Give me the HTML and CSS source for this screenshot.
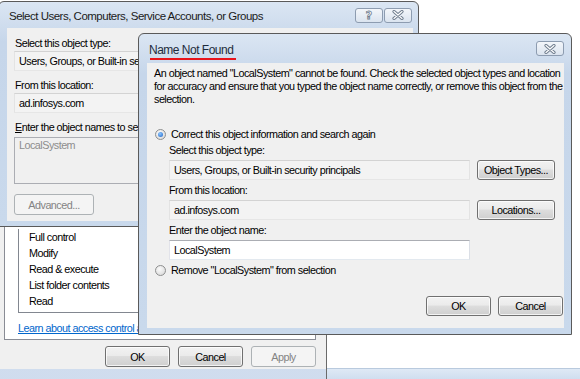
FILE: index.html
```html
<!DOCTYPE html>
<html>
<head>
<meta charset="utf-8">
<link rel="stylesheet" href="styles.css">
</head>
<body>
<div class="desk">
  <div class="win-props"></div>

  <div class="win win-perm">
    <div class="client perm-client">
      <div class="tabpage">
        <ul class="listbox">
          <li>Full control</li>
          <li>Modify</li>
          <li>Read &amp; execute</li>
          <li>List folder contents</li>
          <li>Read</li>
        </ul>
        <a class="link">Learn about access control and permissions</a>
      </div>
      <div class="btn-row perm-btns">
        <span class="btn w65">OK</span>
        <span class="btn w65">Cancel</span>
        <span class="btn w65 disabled">Apply</span>
      </div>
    </div>
  </div>

  <div class="win win-select">
    <div class="titlebar">
      <span class="title sel-title">Select Users, Computers, Service Accounts, or Groups</span>
      <div class="cap-btns">
        <span class="cap-btn help">?</span>
        <span class="cap-btn"><svg width="14" height="10" viewBox="0 0 14 10"><path d="M3 1.5 L11 8.5 M11 1.5 L3 8.5" stroke="#6f7d8e" stroke-width="3.2" stroke-linecap="round"/><path d="M3 1.5 L11 8.5 M11 1.5 L3 8.5" stroke="#fff" stroke-width="1.2" stroke-linecap="round"/></svg></span>
      </div>
    </div>
    <div class="client sel-client">
      <div class="lbl">Select this object type:</div>
      <div class="field ro sel-field">Users, Groups, or Built-in security principals</div>
      <div class="lbl">From this location:</div>
      <div class="field ro sel-field">ad.infosys.com</div>
      <div class="lbl"><u>E</u>nter the object names to select (examples):</div>
      <div class="textarea">LocalSystem</div>
      <span class="btn disabled adv">Advanced...</span>
    </div>
  </div>

  <div class="win win-nnf">
    <div class="titlebar">
      <span class="title nnf-title">Name Not Found</span>
      <span class="cap-btn"><svg width="14" height="10" viewBox="0 0 14 10"><path d="M3 1.5 L11 8.5 M11 1.5 L3 8.5" stroke="#6f7d8e" stroke-width="3.2" stroke-linecap="round"/><path d="M3 1.5 L11 8.5 M11 1.5 L3 8.5" stroke="#fff" stroke-width="1.2" stroke-linecap="round"/></svg></span>
    </div>
    <span class="annot"></span>
    <div class="client nnf-client">
      <p class="msg">An object named "LocalSystem" cannot be found. Check the selected object types and location for accuracy and ensure that you typed the object name correctly, or remove this object from the selection.</p>
      <div class="radio-row first"><span class="radio checked"></span>Correct this object information and search again</div>
      <div class="group">
        <div class="lbl">Select this object type:</div>
        <div class="field-row">
          <div class="field ro">Users, Groups, or Built-in security principals</div>
          <span class="btn side">Object Types...</span>
        </div>
        <div class="lbl">From this location:</div>
        <div class="field-row">
          <div class="field ro">ad.infosys.com</div>
          <span class="btn side">Locations...</span>
        </div>
        <div class="lbl">Enter the object name:</div>
        <div class="field-row">
          <div class="field">LocalSystem</div>
        </div>
      </div>
      <div class="radio-row"><span class="radio"></span>Remove "LocalSystem" from selection</div>
      <div class="btn-row nnf-btns">
        <span class="btn w65">OK</span>
        <span class="btn w65">Cancel</span>
      </div>
    </div>
  </div>
</div>
</body>
</html>
```

FILE: styles.css
```css
* { box-sizing: border-box; }
body {
  margin: 0;
  background: #fff;
  font-family: "Liberation Sans", Arial, sans-serif;
  font-size: 10.8px;
  letter-spacing: -0.52px;
  color: #000;
}
.desk {
  position: relative;
  width: 580px;
  height: 379px;
  overflow: hidden;
  background: #fff;
}

/* generic window */
.win {
  position: absolute;
  border: 1px solid #5a5a5a;
  border-radius: 6px 6px 0 0;
  background: linear-gradient(#dbe6f3, #c6d6ea 40px, #c9d9ec);
  display: flex;
  flex-direction: column;
}
.client {
  background: #f0f0f0;
  flex: 1;
}
.titlebar {
  display: flex;
  align-items: center;
  justify-content: space-between;
}
.title { color: #1b1b1b; white-space: nowrap; }
.cap-btn {
  width: 28px;
  height: 15px;
  border: 1px solid #8d9cb0;
  border-radius: 3px;
  background: linear-gradient(#f3f6fa, #dbe4ef);
  display: flex;
  align-items: center;
  justify-content: center;
}
.cap-btn.help {
  font-family: "DejaVu Sans", sans-serif;
  font-weight: bold;
  font-size: 11px;
  letter-spacing: 0;
  color: #fff;
  -webkit-text-stroke: 0.8px #6f7d8e;
}
.cap-btns { display: flex; gap: 1px; }

/* properties window behind (only bottom frame shows) */
.win-props {
  position: absolute;
  left: 0;
  right: 0;
  top: 368px;
  height: 11px;
  border-top: 1px solid #b9cade;
  background: linear-gradient(#dfe9f5, #d0deef);
}

/* permissions window */
.win-perm {
  left: -9px;
  top: 180px;
  width: 336px;
  height: 213px;
  padding: 8px 0 23px 8px;
  border-radius: 0;
  background: linear-gradient(#d6e2f1, #cfdcee);
  border-color: #6a6a6a;
}
.perm-client {
  display: flex;
  flex-direction: column;
  padding: 3px 10px 0 4px;
}
.tabpage {
  background: #fff;
  border: 1px solid #898c95;
  height: 148px;
  padding: 0 0 0 13px;
  display: flex;
  flex-direction: column;
  justify-content: flex-end;
}
.listbox {
  list-style: none;
  margin: 0;
  padding: 0 0 3px 10px;
  border: 1px solid #828790;
  border-top: none;
  width: 285px;
}
.listbox li { height: 16px; line-height: 16px; }
.link {
  color: #0066cc;
  text-decoration: underline;
  margin: 9px 0 4px 0;
  line-height: 13px;
  white-space: nowrap;
}
.btn-row { display: flex; justify-content: flex-end; gap: 8px; }
.perm-btns { margin-top: 6px; }
.w65 { width: 65px; }

.btn {
  height: 21px;
  border: 1px solid #707070;
  border-radius: 3px;
  background: linear-gradient(#f2f2f2 0%, #ebebeb 45%, #dddddd 50%, #cfcfcf 100%);
  box-shadow: inset 0 0 0 1px rgba(255,255,255,0.75);
  display: flex;
  align-items: center;
  justify-content: center;
  white-space: nowrap;
}
.btn.disabled {
  border-color: #adb2b5;
  background: #f4f4f4;
  box-shadow: none;
  color: #838383;
}

/* select users window */
.win-select {
  left: -2px;
  top: 1px;
  width: 421px;
  height: 226px;
  padding: 0 5px 5px 8px;
}
.win-select .titlebar {
  height: 26px;
  padding: 0 1px 0 2px;
}
.sel-title { font-size: 11.5px; letter-spacing: -0.5px; margin-top: 2px; }
.sel-client {
  padding: 8px 0 0 8px;
  display: flex;
  flex-direction: column;
  align-items: flex-start;
}
.lbl { line-height: 14px; white-space: nowrap; }
.sel-field {
  width: 380px;
  margin: 1px 0 7px -1px;
}
.textarea {
  width: 380px;
  height: 47px;
  margin: 3px 0 10px -1px;
  border: 1px solid #abadb3;
  background: #f0f0f0;
  color: #8d8d8d;
  padding: 1px 4px;
}
.adv { width: 80px; margin-left: -1px; }

/* fields */
.field {
  height: 20px;
  width: 301px;
  border: 1px solid;
  border-color: #abadb3 #dbdfe6 #e3e9ef #e2e3ea;
  background: #fff;
  padding-left: 4px;
  display: flex;
  align-items: center;
  white-space: nowrap;
  overflow: hidden;
}
.field.ro {
  background: #f3f3f3;
  border-color: #d3d3d3 #e3e3e3 #e6e6e6 #e3e3e3;
}

/* name not found dialog */
.win-nnf {
  left: 138px;
  top: 33px;
  width: 434px;
  height: 302px;
  padding: 0 7px 6px 8px;
}
.win-nnf .titlebar {
  height: 29px;
  padding: 0 0 0 2px;
}
.nnf-title { font-size: 12px; letter-spacing: -0.5px; color: #1e2b3c; margin-top: 3px; }
.annot {
  position: absolute;
  left: 11px;
  top: 24px;
  width: 86px;
  height: 2px;
  background: #e8141b;
}
.nnf-client {
  padding: 4px 0 0 7px;
  display: flex;
  flex-direction: column;
}
.msg {
  margin: 0;
  line-height: 13px;
  width: 410px;
}
.radio-row {
  display: flex;
  align-items: center;
  height: 14px;
  line-height: 14px;
  gap: 5px;
  white-space: nowrap;
}
.radio-row.first { margin-top: 21px; }
.radio {
  width: 11px;
  height: 11px;
  border-radius: 50%;
  border: 1px solid #8e8f8f;
  background: radial-gradient(circle at 40% 35%, #fbfbfb, #d4d4d4);
  display: flex;
  align-items: center;
  justify-content: center;
  margin-left: 1px;
}
.radio.checked::after {
  content: "";
  width: 5px;
  height: 5px;
  border-radius: 50%;
  background: radial-gradient(circle at 40% 35%, #8ec7ff, #1b63c6);
}
.group {
  padding-left: 15px;
  display: flex;
  flex-direction: column;
  margin-top: 2px;
}
.group .lbl { margin-bottom: 3px; }
.field-row {
  display: flex;
  gap: 7px;
  margin-bottom: 3px;
}
.btn.side { width: 78px; height: 20px; }
.nnf-btns { margin-top: 19px; padding-right: 1px; gap: 7px; }
.nnf-btns .btn { height: 20px; }
```
